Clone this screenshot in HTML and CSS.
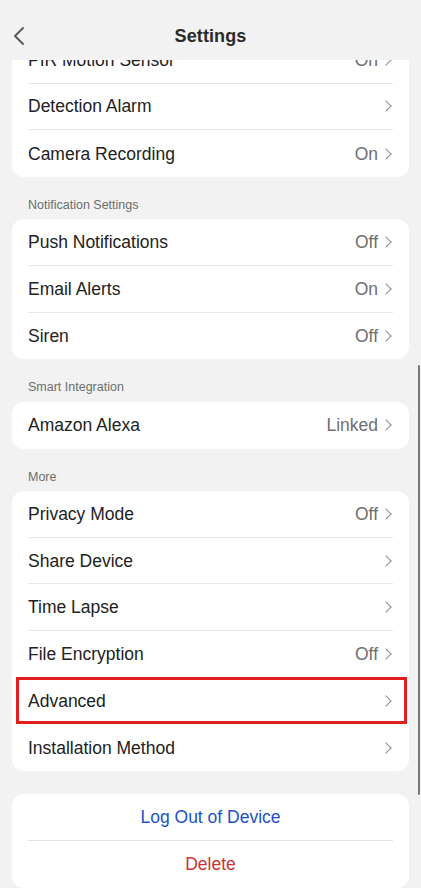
FILE: index.html
```html
<!DOCTYPE html>
<html>
<head>
<meta charset="utf-8">
<link rel="stylesheet" href="styles.css">
</head>
<body>
<div class="screen">
  <header class="topbar">
    <svg class="back" width="12" height="20" viewBox="0 0 12 20"><path d="M10 2 L2 10 L10 18" fill="none" stroke="#555" stroke-width="1.8" stroke-linecap="round" stroke-linejoin="round"/></svg>
    <h1 class="title">Settings</h1>
  </header>
  <main class="viewport">
    <div class="content">
      <section class="card">
        <div class="row"><span class="label">PIR Motion Sensor</span><span class="value">On</span><span class="chev"></span></div>
        <div class="row"><span class="label">Detection Alarm</span><span class="chev"></span></div>
        <div class="row"><span class="label">Camera Recording</span><span class="value">On</span><span class="chev"></span></div>
      </section>
      <div class="section-title">Notification Settings</div>
      <section class="card">
        <div class="row"><span class="label">Push Notifications</span><span class="value">Off</span><span class="chev"></span></div>
        <div class="row"><span class="label">Email Alerts</span><span class="value">On</span><span class="chev"></span></div>
        <div class="row"><span class="label">Siren</span><span class="value">Off</span><span class="chev"></span></div>
      </section>
      <div class="section-title">Smart Integration</div>
      <section class="card">
        <div class="row"><span class="label">Amazon Alexa</span><span class="value">Linked</span><span class="chev"></span></div>
      </section>
      <div class="section-title">More</div>
      <section class="card">
        <div class="row"><span class="label">Privacy Mode</span><span class="value">Off</span><span class="chev"></span></div>
        <div class="row"><span class="label">Share Device</span><span class="chev"></span></div>
        <div class="row"><span class="label">Time Lapse</span><span class="chev"></span></div>
        <div class="row"><span class="label">File Encryption</span><span class="value">Off</span><span class="chev"></span></div>
        <div class="row highlighted"><span class="label">Advanced</span><span class="chev"></span></div>
        <div class="row"><span class="label">Installation Method</span><span class="chev"></span></div>
      </section>
      <section class="card actions">
        <div class="action logout">Log Out of Device</div>
        <div class="action delete">Delete</div>
      </section>
    </div>
    <div class="scrollbar"></div>
  </main>
</div>
</body>
</html>
```
FILE: styles.css
```css
* { box-sizing: border-box; margin: 0; padding: 0; }
html, body { width: 421px; height: 888px; overflow: hidden; background: #f2f2f2; }
body { font-family: "Liberation Sans", Arial, sans-serif; color: #222; }
.screen { width: 421px; height: 888px; display: flex; flex-direction: column; position: relative; }
.topbar { height: 60px; flex: none; display: flex; align-items: center; justify-content: center; position: relative; background: #f2f2f2; z-index: 2; padding-top: 12px; }
.back { position: absolute; left: 13px; top: 26px; }
.title { font-size: 18px; font-weight: 700; color: #2a2a2a; letter-spacing: 0.1px; }
.viewport { flex: 1; overflow: hidden; position: relative; }
.content { margin-top: -23px; padding: 0 12px; }
.card { background: #fff; border-radius: 12px; }
.row { height: 46.67px; display: flex; align-items: center; margin: 0 16px; border-bottom: 1px solid #e6e6e6; position: relative; font-size: 17.5px; line-height: 20px; }
.row:last-child { border-bottom: none; }
.label { flex: 1; color: #222; }
.value { color: #6e6e6e; margin-right: 4px; }
.chev { width: 8px; height: 8px; border-top: 1.5px solid #8c8c92; border-right: 1.5px solid #8c8c92; transform: rotate(45deg); margin-right: 3px; }
.section-title { font-size: 12.5px; line-height: 15.5px; color: #6d6d6d; padding: 21px 16px 6px; }
.row.highlighted::after { content: ""; position: absolute; left: -12px; right: -14px; top: -1px; bottom: -1px; border: 3px solid #e01e1e; }
.actions { margin-top: 23px; }
.action { height: 47px; display: flex; align-items: center; justify-content: center; font-size: 17.5px; margin: 0 16px; }
.logout { color: #1c52c8; border-bottom: 1px solid #e3e3e3; }
.delete { color: #cc3333; }
.scrollbar { position: absolute; right: 1px; top: 305px; width: 2px; height: 430px; background: #7a7a7a; border-radius: 1px; }
```
